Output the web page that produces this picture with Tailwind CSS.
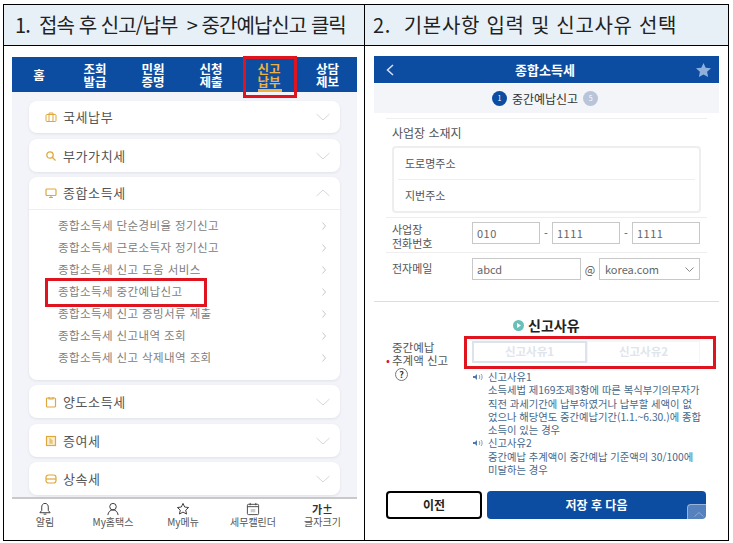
<!DOCTYPE html>
<html lang="ko">
<head>
<meta charset="UTF-8">
<title>종합소득세 중간예납신고</title>
<script src="https://cdn.jsdelivr.net/npm/@tailwindcss/browser@4"></script>
</head>
<body class="bg-white w-[733px] h-[543px] overflow-hidden font-['Noto_Sans_CJK_KR','Noto_Sans',sans-serif]">
<!-- outer table -->
<div class="ml-[3px] mt-[4px] w-[726px] h-[537px] border border-black grid grid-cols-[361px_1fr] grid-rows-[41px_1fr]">
  <div class="border-r border-b border-black bg-[#e8f0f7] pl-[11px] flex items-center text-[20px] text-[#222] tracking-[-0.95px] whitespace-nowrap">1.&nbsp;&nbsp;접속 후 신고/납부 &nbsp;&gt; 중간예납신고 클릭</div>
  <div class="border-b border-black bg-[#e8f0f7] pl-[8px] flex items-center text-[20px] text-[#222] tracking-[0.7px] whitespace-nowrap">2.&nbsp;&nbsp;기본사항 입력 및 신고사유 선택</div>

  <!-- left phone -->
  <div class="border-r border-black relative pl-[8px] pr-[7px] pt-[11px]">
    <div class="h-[35px] bg-[#0c4da2] flex items-center text-white text-[12.5px] leading-[13px] font-bold text-center">
      <div class="w-[54px]">홈</div>
      <div class="w-[58px]">조회<br>발급</div>
      <div class="w-[58px]">민원<br>증명</div>
      <div class="w-[58px]">신청<br>제출</div>
      <div class="w-[58px] text-[#f0b040] relative h-full flex items-center justify-center"><span>신고<br>납부</span><span class="absolute bottom-0 left-[18px] w-[24px] h-[3px] bg-[#f0b040]"></span></div>
      <div class="w-[59px]">상담<br>제보</div>
    </div>
    <div class="h-[405px] bg-[#f3f4f9] pl-[17px] pr-[17px] pt-[9px] flex flex-col gap-[6px] text-[#555]">
      <div class="h-[32px] bg-white rounded-lg shadow-[0_1px_3px_rgba(0,0,0,0.08)] flex items-center pl-[16px] pr-[10px] text-[13px] tracking-[0.6px]">
        <svg class="w-[12px] h-[12px] mr-[6px]" viewBox="0 0 12 12" fill="none" stroke="#e0a83c"><rect x="1" y="3.5" width="10" height="7" rx="1"/><path d="M4 3.5V2h4v1.5M4 3.5v7M8 3.5v7"/></svg>
        <span class="flex-1">국세납부</span>
        <svg class="w-[14px] h-[8px]" viewBox="0 0 14 8" fill="none" stroke="#d5d7dd"><path d="M.5 1l6.500 6 6.500-6"/></svg>
      </div>
      <div class="h-[33px] bg-white rounded-lg shadow-[0_1px_3px_rgba(0,0,0,0.08)] flex items-center pl-[16px] pr-[10px] text-[13px] tracking-[0.6px]">
        <svg class="w-[12px] h-[12px] mr-[6px]" viewBox="0 0 12 12" fill="none" stroke="#e0a83c" stroke-width="1.3"><circle cx="5" cy="5" r="3.2"/><path d="M7.5 7.5L10.5 10.5"/></svg>
        <span class="flex-1">부가가치세</span>
        <svg class="w-[14px] h-[8px]" viewBox="0 0 14 8" fill="none" stroke="#d5d7dd"><path d="M.5 1l6.500 6 6.500-6"/></svg>
      </div>
      <div class="-mt-[1px] h-[203px] bg-white rounded-lg shadow-[0_1px_3px_rgba(0,0,0,0.08)]">
        <div class="h-[33px] flex items-center pl-[16px] pr-[10px] text-[13px] tracking-[0.6px] border-b border-[#eeeff3]">
          <svg class="w-[12px] h-[12px] mr-[6px]" viewBox="0 0 12 12" fill="none" stroke="#e0a83c" stroke-width="1.2"><rect x="1" y="2" width="10" height="6.5" rx="1"/><path d="M4 10.5h4M6 8.5v2"/></svg>
          <span class="flex-1">종합소득세</span>
          <svg class="w-[14px] h-[8px]" viewBox="0 0 14 8" fill="none" stroke="#d5d7dd"><path d="M.5 7l6.500-6 6.500 6"/></svg>
        </div>
        <div class="pt-[5px] pl-[29px] pr-[14px] text-[11.5px] text-[#808080] tracking-[0.4px]">
          <div class="h-[22px] flex items-center justify-between"><span>종합소득세 단순경비율 정기신고</span><svg class="w-[4px] h-[8px]" viewBox="0 0 4 8" fill="none" stroke="#c4c6cc"><path d="M.5.5l3 3.500-3 3.500"/></svg></div>
          <div class="h-[22px] flex items-center justify-between"><span>종합소득세 근로소득자 정기신고</span><svg class="w-[4px] h-[8px]" viewBox="0 0 4 8" fill="none" stroke="#c4c6cc"><path d="M.5.5l3 3.500-3 3.500"/></svg></div>
          <div class="h-[22px] flex items-center justify-between"><span>종합소득세 신고 도움 서비스</span><svg class="w-[4px] h-[8px]" viewBox="0 0 4 8" fill="none" stroke="#c4c6cc"><path d="M.5.5l3 3.500-3 3.500"/></svg></div>
          <div class="h-[22px] flex items-center justify-between"><span>종합소득세 중간예납신고</span><svg class="w-[4px] h-[8px]" viewBox="0 0 4 8" fill="none" stroke="#c4c6cc"><path d="M.5.5l3 3.500-3 3.500"/></svg></div>
          <div class="h-[22px] flex items-center justify-between"><span>종합소득세 신고 증빙서류 제출</span><svg class="w-[4px] h-[8px]" viewBox="0 0 4 8" fill="none" stroke="#c4c6cc"><path d="M.5.5l3 3.500-3 3.500"/></svg></div>
          <div class="h-[22px] flex items-center justify-between"><span>종합소득세 신고내역 조회</span><svg class="w-[4px] h-[8px]" viewBox="0 0 4 8" fill="none" stroke="#c4c6cc"><path d="M.5.5l3 3.500-3 3.500"/></svg></div>
          <div class="h-[22px] flex items-center justify-between"><span>종합소득세 신고 삭제내역 조회</span><svg class="w-[4px] h-[8px]" viewBox="0 0 4 8" fill="none" stroke="#c4c6cc"><path d="M.5.5l3 3.500-3 3.500"/></svg></div>
        </div>
      </div>
      <div class="-mt-[1px] h-[33px] bg-white rounded-lg shadow-[0_1px_3px_rgba(0,0,0,0.08)] flex items-center pl-[16px] pr-[10px] text-[13px] tracking-[0.6px]">
        <svg class="w-[12px] h-[12px] mr-[6px]" viewBox="0 0 12 12" fill="none" stroke="#e0a83c" stroke-width="1.2"><rect x="1.500" y="2" width="9" height="9" rx="1"/><path d="M4 1v2h4V1"/></svg>
        <span class="flex-1">양도소득세</span>
        <svg class="w-[14px] h-[8px]" viewBox="0 0 14 8" fill="none" stroke="#d5d7dd"><path d="M.5 1l6.500 6 6.500-6"/></svg>
      </div>
      <div class="h-[33px] bg-white rounded-lg shadow-[0_1px_3px_rgba(0,0,0,0.08)] flex items-center pl-[16px] pr-[10px] text-[13px] tracking-[0.6px]">
        <svg class="w-[12px] h-[12px] mr-[6px]" viewBox="0 0 12 12" fill="none" stroke="#e0a83c" stroke-width="1.2"><rect x="1.500" y="1.500" width="9" height="9" fill="#fbeed2"/><path d="M4 4h2v4M4 6h4M4 8h4" stroke-width=".8"/></svg>
        <span class="flex-1">증여세</span>
        <svg class="w-[14px] h-[8px]" viewBox="0 0 14 8" fill="none" stroke="#d5d7dd"><path d="M.5 1l6.500 6 6.500-6"/></svg>
      </div>
      <div class="-mt-[1px] h-[33px] bg-white rounded-lg shadow-[0_1px_3px_rgba(0,0,0,0.08)] flex items-center pl-[16px] pr-[10px] text-[13px] tracking-[0.6px]">
        <svg class="w-[12px] h-[12px] mr-[6px]" viewBox="0 0 12 12" fill="none" stroke="#e0a83c" stroke-width="1.2"><rect x="1" y="2" width="10" height="8" rx="2.500"/><path d="M1 6h10"/></svg>
        <span class="flex-1">상속세</span>
        <svg class="w-[14px] h-[8px]" viewBox="0 0 14 8" fill="none" stroke="#d5d7dd"><path d="M.5 1l6.500 6 6.500-6"/></svg>
      </div>
    </div>
    <div class="border-t-2 border-[#c9c9c9] flex text-[10px] text-[#555] text-center leading-[12px] pt-[3px]">
      <div class="w-[66px] flex flex-col items-center">
        <svg class="w-[14px] h-[14px]" viewBox="0 0 15 15" fill="none" stroke="#333"><path d="M7.500 1.500c-2.500 0-3.500 2-3.500 4v3.500l-2 2.500h11l-2-2.500V5.500c0-2-1-4-3.500-4zM6 13h3"/></svg>알림
      </div>
      <div class="w-[70px] flex flex-col items-center">
        <svg class="w-[14px] h-[14px]" viewBox="0 0 15 15" fill="none" stroke="#333"><circle cx="7.500" cy="5" r="3.500"/><path d="M2 14c.5-3.500 2.500-5.500 5.500-5.500S12.500 10.500 13 14"/></svg>My홈택스
      </div>
      <div class="w-[70px] flex flex-col items-center">
        <svg class="w-[14px] h-[14px]" viewBox="0 0 15 15" fill="none" stroke="#333"><path d="M7.500 1.500l1.800 3.900 4.200.5-3.100 2.800.9 4.200-3.800-2.100-3.800 2.100.9-4.200L1.500 5.900l4.200-.5z"/></svg>My메뉴
      </div>
      <div class="w-[70px] flex flex-col items-center">
        <svg class="w-[14px] h-[14px]" viewBox="0 0 15 15" fill="none" stroke="#444"><rect x="1.500" y="2.500" width="12" height="11" rx="1"/><path d="M1.500 5h12M4.500 1v2.500M10.500 1v2.500"/><rect x="5" y="7.500" width="5" height="3.500" fill="#ccc" stroke="none"/></svg>세무캘린더
      </div>
      <div class="w-[69px] flex flex-col items-center">
        <span class="h-[14px] text-[11px] leading-[14px] font-bold text-[#333]">가±</span>글자크기
      </div>
    </div>
    <!-- highlights -->
    <div class="absolute left-[239px] top-[10px] w-[54px] h-[42px] border-[3px] border-[#e0141e]"></div>
    <div class="absolute left-[41px] top-[232px] w-[162px] h-[29px] border-[3px] border-[#e0141e]"></div>
  </div>

  <!-- right phone -->
  <div class="relative pl-[9px] pr-[9px] pt-[10px] text-[#555]">
    <div class="h-[27px] bg-[#0c4da2] flex items-center justify-between pl-[12px] pr-[8px] text-white text-[13px] font-bold">
      <svg class="w-[8px] h-[12px]" viewBox="0 0 8 12" fill="none" stroke="#d7e2f2" stroke-width="1.500"><path d="M7 1L1.500 6 7 11"/></svg>
      <span>종합소득세</span>
      <svg class="w-[15px] h-[14px]" viewBox="0 0 15 14" fill="#8fb0dc"><path d="M7.500 0l2.200 4.700 5.300.6-3.900 3.500 1 5.200-4.600-2.600L2.900 14l1-5.200L0 5.300l5.300-.6z"/></svg>
    </div>
    <div class="mt-[1px] h-[29px] bg-[#f3f5f9] flex items-center justify-center gap-[5px] text-[12px] text-[#333] pr-[3px]">
      <span class="w-[15px] h-[15px] rounded-full bg-[#0c4da2] text-white text-[7px] flex items-center justify-center">1</span>
      <span>중간예납신고</span>
      <span class="w-[15px] h-[15px] rounded-full bg-[#b7c4d9] text-white text-[7px] flex items-center justify-center">5</span>
    </div>
    <div class="mx-[12px] mt-[5px] border-t border-[#eeeeee] pt-[7px]">
      <div class="pl-[6px] text-[12px] leading-[14px]">사업장 소재지</div>
      <div class="ml-[6px] mr-[6px] mt-[6px] h-[67px] border-2 border-[#eeeeee] rounded text-[11px]">
        <div class="h-[32px] mx-[4px] pl-[7px] border-b border-[#eeeeee] flex items-center">도로명주소</div>
        <div class="h-[31px] pl-[11px] flex items-center">지번주소</div>
      </div>
      <div class="mt-[4px] h-[36px] border-t border-b border-[#eeeeee] pl-[6px] pt-[4px] flex items-start text-[11px] leading-[14px]">
        <div class="w-[80px]">사업장<br>전화번호</div>
        <div class="w-[68px] h-[22px] border border-[#c8c8c8] flex items-center pl-[4px] text-[#666] tracking-[0.5px]">010</div>
        <div class="w-[12px] h-[22px] flex items-center justify-center">-</div>
        <div class="w-[68px] h-[22px] border border-[#c8c8c8] flex items-center pl-[4px] text-[#666] tracking-[0.5px]">1111</div>
        <div class="w-[12px] h-[22px] flex items-center justify-center">-</div>
        <div class="w-[68px] h-[22px] border border-[#c8c8c8] flex items-center pl-[4px] text-[#666] tracking-[0.5px]">1111</div>
      </div>
      <div class="mt-[5px] pl-[6px] flex items-start text-[11px]">
        <div class="w-[80px] pt-[2px]">전자메일</div>
        <div class="w-[109px] h-[22px] border border-[#c8c8c8] flex items-center pl-[4px] text-[#666]">abcd</div>
        <div class="w-[18px] h-[22px] flex items-center justify-center">@</div>
        <div class="w-[101px] h-[22px] border border-[#c8c8c8] flex items-center justify-between pl-[5px] pr-[5px] text-[#666]">korea.com
          <svg class="w-[9px] h-[5px]" viewBox="0 0 9 5" fill="none" stroke="#888"><path d="M.5.5l4 4 4-4"/></svg>
        </div>
      </div>
    </div>
    <div class="mt-[21px] border-t border-[#dddddd]"></div>
    <div class="mt-[14px] pl-[139px] flex items-center gap-[4px] text-[14px] leading-[18px] font-bold text-[#222]">
      <svg class="w-[11px] h-[11px]" viewBox="0 0 11 11"><circle cx="5.500" cy="5.500" r="5.500" fill="#68c0b8"/><path d="M4 3l4 2.500L4 8z" fill="#fff"/></svg>
      신고사유
    </div>
    <div class="mt-[7px] flex">
      <div class="w-[98px] pl-[18px] text-[11.5px] leading-[13px] whitespace-nowrap">
        <div>중간예납</div>
        <div class="relative"><span class="absolute -left-[6px] top-0 text-[#e0141e]">•</span>추계액 신고</div>
        <div class="mt-[1px] w-[13px] h-[13px] ml-[3px] border border-[#777] rounded-full text-[9px] leading-[11px] text-center font-bold text-[#333]">?</div>
      </div>
      <div class="w-[228px]">
        <div class="flex h-[22px] text-[11.5px] font-bold text-[#dfe5ec]">
          <div class="w-[115px] border-2 border-[#dde3ea] flex items-center justify-center">신고사유1</div>
          <div class="w-[113px] border border-[#f4f5f7] flex items-center justify-center">신고사유2</div>
        </div>
        <div class="mt-[7px] text-[10.3px] leading-[13.3px] text-[#46688a] relative pl-[16px] whitespace-nowrap">
          <div class="relative"><svg class="absolute -left-[15px] top-[4px] w-[10px] h-[6px]" viewBox="0 0 10 6" fill="#4f79a8"><path d="M0 2h2l2-2v6L2 4H0z"/><path d="M6 1c1 1 1 3 0 4M8 0c1.500 1.500 1.500 4.500 0 6" stroke="#4f79a8" fill="none" stroke-width=".7"/></svg>신고사유1</div>
          <div>소득세법 제169조제3항에 따른 복식부기의무자가</div>
          <div>직전 과세기간에 납부하였거나 납부할 세액이 없</div>
          <div>었으나 해당연도 중간예납기간(1.1.~6.30.)에 종합</div>
          <div>소득이 있는 경우</div>
          <div class="relative"><svg class="absolute -left-[15px] top-[4px] w-[10px] h-[6px]" viewBox="0 0 10 6" fill="#4f79a8"><path d="M0 2h2l2-2v6L2 4H0z"/><path d="M6 1c1 1 1 3 0 4M8 0c1.500 1.500 1.500 4.500 0 6" stroke="#4f79a8" fill="none" stroke-width=".7"/></svg>신고사유2</div>
          <div>중간예납 추계액이 중간예납 기준액의 30/100에</div>
          <div>미달하는 경우</div>
        </div>
      </div>
    </div>
    <div class="absolute left-[21px] top-[445px] flex gap-[5px] text-[12px] font-bold">
      <div class="w-[96px] h-[28px] border-2 border-black rounded bg-white text-[#222] flex items-center justify-center">이전</div>
      <div class="w-[219px] h-[28px] rounded bg-[#0c4da2] text-white flex items-center justify-center">저장 후 다음</div>
    </div>
    <!-- scroll top button and highlight -->
    <div class="absolute left-[322px] top-[458px] w-[23px] h-[20px] rounded-sm bg-white/30 border border-white/40 flex items-center justify-center">
      <svg class="w-[10px] h-[5px]" viewBox="0 0 10 5" fill="none" stroke="#8fa9cc"><path d="M.5 4.500l4.500-4 4.500 4"/></svg>
    </div>
    <div class="absolute left-[99px] top-[290px] w-[252px] h-[33px] border-[3px] border-[#e0141e]"></div>
  </div>
</div>
</body>
</html>
